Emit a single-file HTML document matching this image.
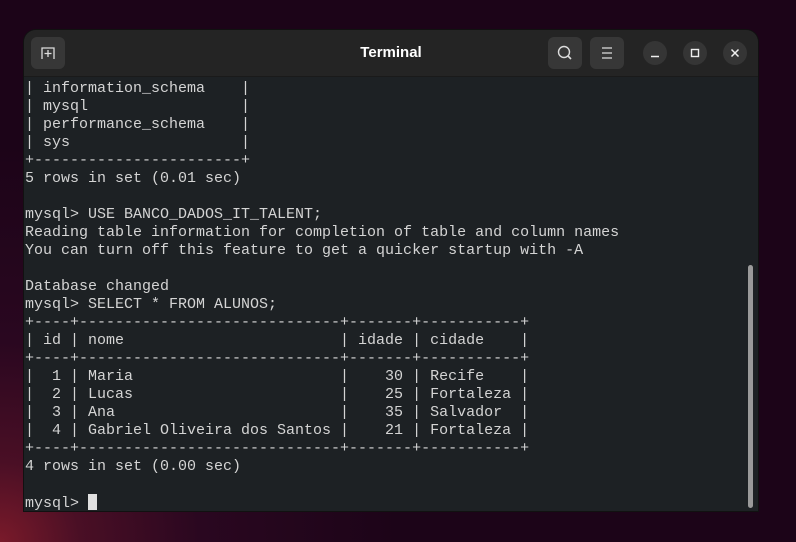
<!DOCTYPE html>
<html><head><style>
body{margin:0;width:796px;height:542px;overflow:hidden;background:radial-gradient(circle at 0% 100%,#7a1a2a 0,#4a0f25 80px,#2a0720 200px,#1c0418 400px) ,#1c0418;font-family:"Liberation Sans",sans-serif;position:relative}
.win{position:absolute;left:24px;top:30px;width:734px;height:481px;background:#1d2124;border-radius:12px 12px 0 0;overflow:hidden;box-shadow:0 0 0 1px #111}
.tb{position:absolute;left:0;top:0;width:734px;height:46px;background:#242424;border-bottom:1px solid #1a1a1a}
.btn{position:absolute;top:7px;width:34px;height:32px;background:#373737;border-radius:6px}
.circ{position:absolute;top:11px;width:24px;height:24px;background:#353535;border-radius:50%}
.title{position:absolute;left:0;width:734px;top:14px;text-align:center;color:#fff;font-weight:bold;font-size:15px}
pre{position:absolute;left:1px;top:50px;margin:0;font-family:"Liberation Mono",monospace;font-size:15px;line-height:18px;color:#d4d4d4}
.cur{display:inline-block;width:9px;height:16px;background:#e0e0e0;vertical-align:-3px}
.sb{position:absolute;left:724px;top:235px;width:5px;height:243px;background:#9a9a9a;border-radius:3px}
</style></head><body>
<div class="win">
<div class="tb">
<div class="btn" style="left:7px"><svg width="34" height="32"><path d="M11 22V11h12v11M17 13v7M13.5 16.5h7" stroke="#ddd" stroke-width="1.3" fill="none"/></svg></div>
<div class="title">Terminal</div>
<div class="btn" style="left:524px"><svg width="34" height="32"><circle cx="16" cy="15" r="5.5" stroke="#ddd" stroke-width="1.4" fill="none"/><path d="M20 19l3 3" stroke="#ddd" stroke-width="1.6"/></svg></div>
<div class="btn" style="left:566px"><svg width="34" height="32"><path d="M12 11h10M12 16h10M12 21h10" stroke="#ddd" stroke-width="1.3"/></svg></div>
<div class="circ" style="left:619px"><svg width="24" height="24"><path d="M8 15.5h8" stroke="#eee" stroke-width="1.6"/></svg></div>
<div class="circ" style="left:659px"><svg width="24" height="24"><rect x="8.5" y="8.5" width="7" height="7" stroke="#eee" stroke-width="1.4" fill="none"/></svg></div>
<div class="circ" style="left:699px"><svg width="24" height="24"><path d="M8.5 8.5l7 7M15.5 8.5l-7 7" stroke="#eee" stroke-width="1.5"/></svg></div>
</div>
<pre>| information_schema    |
| mysql                 |
| performance_schema    |
| sys                   |
+-----------------------+
5 rows in set (0.01 sec)

mysql&gt; USE BANCO_DADOS_IT_TALENT;
Reading table information for completion of table and column names
You can turn off this feature to get a quicker startup with -A

Database changed
mysql&gt; SELECT * FROM ALUNOS;
+----+-----------------------------+-------+-----------+
| id | nome                        | idade | cidade    |
+----+-----------------------------+-------+-----------+
|  1 | Maria                       |    30 | Recife    |
|  2 | Lucas                       |    25 | Fortaleza |
|  3 | Ana                         |    35 | Salvador  |
|  4 | Gabriel Oliveira dos Santos |    21 | Fortaleza |
+----+-----------------------------+-------+-----------+
4 rows in set (0.00 sec)

mysql&gt; <span class="cur"></span></pre>
<div class="sb"></div>
</div>
</body></html>
